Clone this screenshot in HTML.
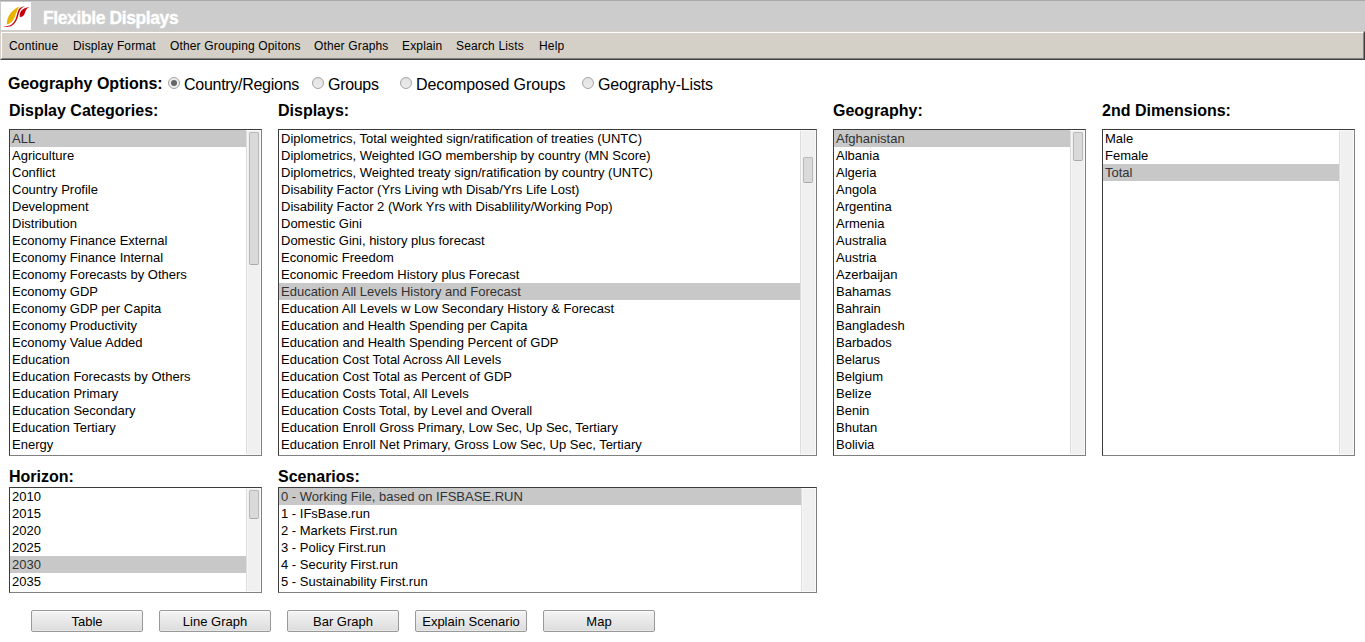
<!DOCTYPE html>
<html><head><meta charset="utf-8">
<style>
*{margin:0;padding:0;box-sizing:border-box}
html,body{width:1365px;height:642px;overflow:hidden;background:#fff;font-family:"Liberation Sans",sans-serif;color:#000}
.abs{position:absolute;white-space:nowrap}
#hdr{position:absolute;left:0;top:0;width:1365px;height:31px;background:#cccccc;border-top:1px solid #a8a8a8}
#logo{position:absolute;left:1px;top:2px;width:30px;height:28px;background:#fff}
#title{position:absolute;left:43px;top:8px;font-weight:bold;font-size:17.5px;line-height:20px;letter-spacing:-0.4px;color:#fff;-webkit-text-stroke:0.35px #fff}
#menu{position:absolute;left:0;top:31px;width:1365px;height:29px;background:#d4d0c8;
 border-top:1px solid #d4d0c8;border-left:1px solid #d4d0c8;border-bottom:1px solid #404040;border-right:1px solid #404040}
#menu .in{position:absolute;left:0;top:0;right:0;bottom:0;border-top:1px solid #fff;border-left:1px solid #fff;border-bottom:1px solid #808080;border-right:1px solid #808080}
.mi{position:absolute;top:39px;font-size:12px;line-height:14px;letter-spacing:0.15px;white-space:nowrap}
.lbl{position:absolute;font-size:16px;line-height:18px;white-space:nowrap}
.hd{position:absolute;font-size:16px;line-height:18px;font-weight:bold;white-space:nowrap}
.radio{position:absolute;top:77px;width:12px;height:12px;border-radius:50%;border:1px solid #a4a4a4;background:linear-gradient(#e2e2e2,#ececec)}
.radio.on{background:#ededed}
.radio.on:after{content:"";position:absolute;left:2px;top:2px;width:6px;height:6px;border-radius:50%;background:#666}
.lb{position:absolute;background:#fff;border-top:1px solid #3c3c3c;border-left:1px solid #3c3c3c;border-bottom:1px solid #808080;border-right:1px solid #808080;overflow:hidden}
.lb .r{height:17px;line-height:17px;font-size:13px;padding-left:2px;white-space:nowrap;overflow:hidden}
.lb .r.s{background:#c8c8c8;color:#323232}
.lb .rows{position:absolute;left:0;top:0}
.tr{position:absolute;top:0;bottom:0;right:0;width:15px;background:linear-gradient(90deg,#dcdcdc 0,#dcdcdc 1px,#f6f6f6 1px,#f6f6f6 2px,#f0f0f0 2px,#f0f0f0 calc(100% - 1px),#f9f9f9 calc(100% - 1px));box-shadow:inset 0 1px #f8f8f8,inset 0 -1px #fafafa}
.th{position:absolute;width:10px;border:1px solid #b9b9b9;border-bottom-color:#a9a9a9;border-radius:2px;background:#dadada}
.btn{position:absolute;top:610px;width:112px;height:22px;border:1px solid #999;border-radius:2px;background:linear-gradient(#f4f4f4,#dcdcdc);box-shadow:inset 0 1px #fbfbfb,inset 0 -1px #e8e8e8;font-size:13px;padding-top:1px;line-height:20px;text-align:center;white-space:nowrap}
</style></head><body>
<div id="hdr"></div>
<div id="logo"><svg width="30" height="28" viewBox="1 2 30 28" style="position:absolute;left:0;top:0">
<path d="M19.6,6.6 C16,8 11.5,11 9,15.4 C7.5,18.5 6.6,21.5 6.8,24.6 C10,24 13,21.5 14.8,17 C16,13.5 17,10 19.6,6.6 Z" fill="#e8b400"/>
<path d="M3.2,26.4 C6,27.6 10,27 12.5,25.3 C15,23.6 16.5,21 17.6,17.8 C18.6,14.8 19,12 20.2,10 C21.3,8.2 23,6.8 24.8,5.9 C22.5,6.2 20,7.5 18.8,9.2 C17.6,11.2 17.2,14 16.3,17 C15.3,20.3 14,22.8 11.5,24.4 C9,25.8 6,26.4 3.2,26.4 Z" fill="#c8000e"/>
<path d="M19.8,17 C19.5,14.5 20,12 21.5,10.5 C23,9 26,7.5 29.8,7.1 C27.5,8 26,9.5 25.2,12 C24.5,15 23,17 19.8,17 Z" fill="#c8000e"/>
</svg></div>
<div id="title">Flexible Displays</div>
<div id="menu"><div class="in"></div></div>
<div class="mi" style="left:9px">Continue</div>
<div class="mi" style="left:73px">Display Format</div>
<div class="mi" style="left:170px">Other Grouping Opitons</div>
<div class="mi" style="left:314px">Other Graphs</div>
<div class="mi" style="left:402px">Explain</div>
<div class="mi" style="left:456px">Search Lists</div>
<div class="mi" style="left:539px">Help</div>

<div class="hd" style="left:8px;top:75px">Geography Options:</div>
<div class="radio on" style="left:168px"></div>
<div class="lbl" style="left:184px;top:76px;letter-spacing:-0.28px">Country/Regions</div>
<div class="radio" style="left:312px"></div>
<div class="lbl" style="left:328px;top:76px;letter-spacing:-0.3px">Groups</div>
<div class="radio" style="left:400px"></div>
<div class="lbl" style="left:416px;top:76px;letter-spacing:-0.1px">Decomposed Groups</div>
<div class="radio" style="left:582px"></div>
<div class="lbl" style="left:598px;top:76px;letter-spacing:-0.17px">Geography-Lists</div>

<div class="hd" style="left:9px;top:102px">Display Categories:</div>
<div class="hd" style="left:278px;top:102px">Displays:</div>
<div class="hd" style="left:833px;top:102px">Geography:</div>
<div class="hd" style="left:1102px;top:102px">2nd Dimensions:</div>
<div class="hd" style="left:9px;top:468px">Horizon:</div>
<div class="hd" style="left:278px;top:468px">Scenarios:</div>

<!-- Display Categories -->
<div class="lb" style="left:9px;top:129px;width:253px;height:327px">
<div class="rows" style="width:236px">
<div class="r s">ALL</div><div class="r">Agriculture</div><div class="r">Conflict</div><div class="r">Country Profile</div><div class="r">Development</div><div class="r">Distribution</div><div class="r">Economy Finance External</div><div class="r">Economy Finance Internal</div><div class="r">Economy Forecasts by Others</div><div class="r">Economy GDP</div><div class="r">Economy GDP per Capita</div><div class="r">Economy Productivity</div><div class="r">Economy Value Added</div><div class="r">Education</div><div class="r">Education Forecasts by Others</div><div class="r">Education Primary</div><div class="r">Education Secondary</div><div class="r">Education Tertiary</div><div class="r">Energy</div><div class="r">Environment</div>
</div>
<div class="tr"><div class="th" style="left:3px;top:2px;height:133px"></div></div>
</div>

<!-- Displays -->
<div class="lb" style="left:278px;top:129px;width:539px;height:327px">
<div class="rows" style="width:521px">
<div class="r">Diplometrics, Total weighted sign/ratification of treaties (UNTC)</div>
<div class="r">Diplometrics, Weighted IGO membership by country (MN Score)</div>
<div class="r">Diplometrics, Weighted treaty sign/ratification by country (UNTC)</div>
<div class="r">Disability Factor (Yrs Living wth Disab/Yrs Life Lost)</div>
<div class="r">Disability Factor 2 (Work Yrs with Disablility/Working Pop)</div>
<div class="r">Domestic Gini</div>
<div class="r">Domestic Gini, history plus forecast</div>
<div class="r">Economic Freedom</div>
<div class="r">Economic Freedom History plus Forecast</div>
<div class="r s">Education All Levels History and Forecast</div>
<div class="r">Education All Levels w Low Secondary History &amp; Forecast</div>
<div class="r">Education and Health Spending per Capita</div>
<div class="r">Education and Health Spending Percent of GDP</div>
<div class="r">Education Cost Total Across All Levels</div>
<div class="r">Education Cost Total as Percent of GDP</div>
<div class="r">Education Costs Total, All Levels</div>
<div class="r">Education Costs Total, by Level and Overall</div>
<div class="r">Education Enroll Gross Primary, Low Sec, Up Sec, Tertiary</div>
<div class="r">Education Enroll Net Primary, Gross Low Sec, Up Sec, Tertiary</div>
<div class="r">Education Enroll Net Primary</div>
</div>
<div class="tr" style="width:16px"><div class="th" style="left:3px;top:27px;height:26px"></div></div>
</div>

<!-- Geography -->
<div class="lb" style="left:833px;top:129px;width:253px;height:327px">
<div class="rows" style="width:236px">
<div class="r s">Afghanistan</div><div class="r">Albania</div><div class="r">Algeria</div><div class="r">Angola</div><div class="r">Argentina</div><div class="r">Armenia</div><div class="r">Australia</div><div class="r">Austria</div><div class="r">Azerbaijan</div><div class="r">Bahamas</div><div class="r">Bahrain</div><div class="r">Bangladesh</div><div class="r">Barbados</div><div class="r">Belarus</div><div class="r">Belgium</div><div class="r">Belize</div><div class="r">Benin</div><div class="r">Bhutan</div><div class="r">Bolivia</div><div class="r">Bosnia</div>
</div>
<div class="tr"><div class="th" style="left:3px;top:2px;height:29px"></div></div>
</div>

<!-- 2nd Dimensions -->
<div class="lb" style="left:1102px;top:129px;width:253px;height:327px">
<div class="rows" style="width:236px">
<div class="r">Male</div><div class="r">Female</div><div class="r s">Total</div>
</div>
<div class="tr"></div>
</div>

<!-- Horizon -->
<div class="lb" style="left:9px;top:487px;width:253px;height:106px">
<div class="rows" style="width:236px">
<div class="r">2010</div><div class="r">2015</div><div class="r">2020</div><div class="r">2025</div><div class="r s">2030</div><div class="r">2035</div><div class="r">2040</div>
</div>
<div class="tr"><div class="th" style="left:3px;top:2px;height:29px"></div></div>
</div>

<!-- Scenarios -->
<div class="lb" style="left:278px;top:487px;width:539px;height:106px">
<div class="rows" style="width:522px">
<div class="r s">0 - Working File, based on IFSBASE.RUN</div><div class="r">1 - IFsBase.run</div><div class="r">2 - Markets First.run</div><div class="r">3 - Policy First.run</div><div class="r">4 - Security First.run</div><div class="r">5 - Sustainability First.run</div>
</div>
<div class="tr"></div>
</div>

<div class="btn" style="left:31px">Table</div>
<div class="btn" style="left:159px">Line Graph</div>
<div class="btn" style="left:287px">Bar Graph</div>
<div class="btn" style="left:415px">Explain Scenario</div>
<div class="btn" style="left:543px">Map</div>
</body></html>
